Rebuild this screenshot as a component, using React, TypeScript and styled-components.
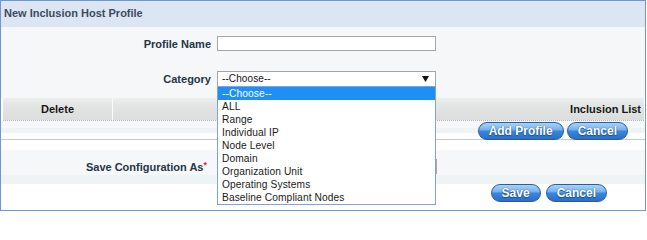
import React from "react";
import styled, { createGlobalStyle } from "styled-components";

const CATEGORIES = [
  "--Choose--",
  "ALL",
  "Range",
  "Individual IP",
  "Node Level",
  "Domain",
  "Organization Unit",
  "Operating Systems",
  "Baseline Compliant Nodes",
];

const GlobalStyle = createGlobalStyle`
  html, body {
    margin: 0;
    padding: 0;
    background: #ffffff;
  }
  body {
    font-family: "Liberation Sans", Arial, sans-serif;
  }
`;

const Frame = styled.div`
  width: 646px;
  height: 211px;
  box-sizing: border-box;
  border: 1px solid #6a98d8;
  background: #ffffff;
  overflow: hidden;
`;

const TitleBar = styled.div`
  height: 26px;
  line-height: 24px;
  padding-left: 3px;
  background: #dce6f2;
  color: #3a4b60;
  font-size: 11px;
  font-weight: bold;
`;

const FormArea = styled.div`
  height: 71px;
  box-sizing: border-box;
  padding-top: 9px;
  background: #f5f7f9;
  display: flex;
  flex-direction: column;
  gap: 20px;
`;

const FieldRow = styled.div`
  display: flex;
  align-items: center;
  gap: 6px;
  height: 15px;
`;

const Label = styled.label<{ $pad?: number }>`
  width: 210px;
  box-sizing: border-box;
  padding-right: ${(p) => p.$pad ?? 0}px;
  text-align: right;
  font-size: 11px;
  font-weight: bold;
  color: #253548;
  white-space: nowrap;
`;

const Required = styled.span`
  color: #d9302a;
  font-size: 9px;
  vertical-align: 3px;
`;

const TextInput = styled.div<{ $w: number }>`
  width: ${(p) => p.$w}px;
  height: 15px;
  box-sizing: border-box;
  border: 1px solid #a6a6a6;
  background: #ffffff;
`;

const SelectWrap = styled.div`
  position: relative;
  width: 219px;
  height: 16px;
`;

const SelectBox = styled.div`
  height: 16px;
  box-sizing: border-box;
  border: 1px solid #a6a6a6;
  background: #ffffff;
  display: flex;
  align-items: center;
  justify-content: space-between;
  padding: 0 6px 0 4px;
  font-size: 10px;
  letter-spacing: 0.1px;
  color: #111111;
`;

const DropList = styled.ul`
  position: absolute;
  left: 0;
  top: 15px;
  width: 219px;
  margin: 0;
  padding: 0;
  list-style: none;
  box-sizing: border-box;
  border: 1px solid #7ea4dc;
  background: #ffffff;
  z-index: 5;
`;

const DropItem = styled.li<{ $active?: boolean }>`
  height: 13px;
  line-height: 13px;
  padding-left: 4px;
  font-size: 10.2px;
  letter-spacing: 0.1px;
  color: ${(p) => (p.$active ? "#ffffff" : "#1a1a1a")};
  background: ${(p) => (p.$active ? "#1e8ff5" : "transparent")};
  white-space: nowrap;
`;

const TableHead = styled.div`
  height: 23px;
  margin: 0 1px 0 2px;
  display: flex;
  box-sizing: border-box;
  background: linear-gradient(to bottom, #eef0f0 0%, #e4e6e6 30%, #dcdede 100%);
  border-bottom: 1px dotted #b4b8b8;
`;

const HeadCell = styled.div<{ $align: "center" | "right"; $w?: number }>`
  ${(p) => (p.$w ? `width: ${p.$w}px;` : "flex: 1;")}
  display: flex;
  align-items: center;
  justify-content: ${(p) => (p.$align === "center" ? "center" : "flex-end")};
  padding-right: ${(p) => (p.$align === "right" ? 3 : 0)}px;
  border-right: ${(p) => (p.$w ? "1px solid #fbfbfb" : "none")};
  font-size: 11px;
  font-weight: bold;
  color: #161616;
`;

const ActionRow = styled.div`
  height: 19px;
  box-sizing: border-box;
  padding: 1px 17px 0 0;
  display: flex;
  justify-content: flex-end;
  gap: 3px;
  background: linear-gradient(
    to bottom,
    #f5f7f9 0 7px,
    #eef3f4 7px 12px,
    #ffffff 12px
  );
  border-bottom: 1px solid #c3cbd3;
`;

const SaveArea = styled.div`
  height: 69px;
  box-sizing: border-box;
  padding-top: 19px;
  background: linear-gradient(
    to bottom,
    #ffffff 0 10px,
    #f5f7f9 10px 35px,
    #eef3f4 35px 44px,
    #ffffff 44px
  );
`;

const SaveButtons = styled.div`
  margin-top: 10px;
  padding-right: 38px;
  display: flex;
  justify-content: flex-end;
  gap: 5px;
`;

const PillButton = styled.button`
  height: 18px;
  box-sizing: border-box;
  padding: 0 10px;
  border: 1px solid #2b5c9e;
  border-radius: 9px;
  background: linear-gradient(
    to bottom,
    #a8d2f8 0%,
    #78b4ee 40%,
    #3a86dc 52%,
    #2a6ec8 100%
  );
  color: #ffffff;
  font-family: "Liberation Sans", Arial, sans-serif;
  font-size: 12px;
  font-weight: bold;
  line-height: 15px;
  text-shadow: 0 0 1px #1d4f8e, 0 1px 1px #1d4f8e;
  cursor: pointer;
`;

const Arrow = () => (
  <svg width="7" height="6" viewBox="0 0 7 6">
    <polygon points="0,0 7,0 3.5,6" fill="#111" />
  </svg>
);

export default function App() {
  return (
    <>
      <GlobalStyle />
      <Frame>
        <TitleBar>New Inclusion Host Profile</TitleBar>
        <FormArea>
          <FieldRow>
            <Label>Profile Name</Label>
            <TextInput $w={219} />
          </FieldRow>
          <FieldRow>
            <Label>Category</Label>
            <SelectWrap>
              <SelectBox>
                <span>--Choose--</span>
                <Arrow />
              </SelectBox>
              <DropList>
                {CATEGORIES.map((c, i) => (
                  <DropItem key={c} $active={i === 0}>
                    {c}
                  </DropItem>
                ))}
              </DropList>
            </SelectWrap>
          </FieldRow>
        </FormArea>
        <TableHead>
          <HeadCell $align="center" $w={109}>
            Delete
          </HeadCell>
          <HeadCell $align="right">Inclusion List</HeadCell>
        </TableHead>
        <ActionRow>
          <PillButton>Add Profile</PillButton>
          <PillButton>Cancel</PillButton>
        </ActionRow>
        <SaveArea>
          <FieldRow>
            <Label $pad={4}>
              Save Configuration As<Required>*</Required>
            </Label>
            <TextInput $w={220} />
          </FieldRow>
          <SaveButtons>
            <PillButton>Save</PillButton>
            <PillButton>Cancel</PillButton>
          </SaveButtons>
        </SaveArea>
      </Frame>
    </>
  );
}
